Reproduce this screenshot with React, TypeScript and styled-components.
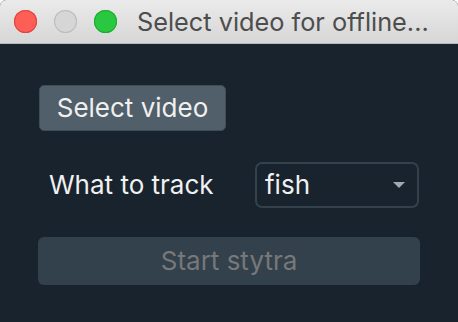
import React from 'react';
import styled, { createGlobalStyle } from 'styled-components';

const Global = createGlobalStyle`
  html, body {
    margin: 0;
    padding: 0;
    background: #ffffff;
  }
  body {
    font-family: Inter, "Liberation Sans", sans-serif;
  }
`;

const Window = styled.div`
  width: 458px;
  height: 322px;
  display: flex;
  flex-direction: column;
  background: #19232d;
  border-radius: 6px 6px 0 0;
  overflow: hidden;
`;

const TitleBar = styled.div`
  height: 43px;
  flex: none;
  display: flex;
  align-items: center;
  padding-left: 14px;
  background: linear-gradient(#ebebeb, #d6d6d6);
  border-bottom: 1px solid #b9b9b9;
`;

const Light = styled.span<{ $color: string; $border: string }>`
  width: 23px;
  height: 23px;
  border-radius: 50%;
  background: ${(p) => p.$color};
  box-shadow: inset 0 0 0 1px ${(p) => p.$border};
  margin-right: 17px;
`;

const Title = styled.div`
  font-size: 25.3px;
  color: #4d4d4d;
  margin-left: 3px;
  white-space: nowrap;
`;

const Body = styled.div`
  display: flex;
  flex-direction: column;
  padding: 41px 38px 0 38px;
`;

const SelectButton = styled.button`
  align-self: flex-start;
  width: 187px;
  height: 46px;
  margin-left: 1px;
  background: #505f69;
  border: 1px solid #3f4d57;
  border-radius: 5px;
  color: #f0f0f0;
  font-family: inherit;
  font-size: 26px;
  padding: 0 0 2px 0;
`;

const Row = styled.div`
  display: flex;
  align-items: center;
  margin-top: 31px;
  height: 46px;
`;

const Label = styled.div`
  width: 206px;
  padding-left: 11px;
  padding-bottom: 2px;
  color: #f0f0f0;
  font-size: 26px;
`;

const Combo = styled.div`
  width: 164px;
  height: 46px;
  box-sizing: border-box;
  border: 2px solid #32414b;
  border-radius: 7px;
  display: flex;
  align-items: center;
  justify-content: space-between;
  padding: 0 12px 2px 8px;
  color: #f0f0f0;
  font-size: 26px;
`;

const Arrow = styled.span`
  width: 0;
  height: 0;
  margin-top: 2px;
  border-left: 6px solid transparent;
  border-right: 6px solid transparent;
  border-top: 6px solid #9da9b5;
`;

const StartButton = styled.button`
  margin-top: 29px;
  width: 382px;
  height: 48px;
  background: #32414b;
  border: none;
  border-radius: 6px;
  color: #787878;
  font-family: inherit;
  font-size: 26px;
  padding: 0 0 2px 0;
`;

export default function App() {
  return (
    <>
      <Global />
      <Window>
        <TitleBar>
          <Light $color="#fd5f57" $border="#e0443e" />
          <Light $color="#d6d6d6" $border="#bcbcbc" />
          <Light $color="#2ac840" $border="#1eaa30" />
          <Title>Select video for offline...</Title>
        </TitleBar>
        <Body>
          <SelectButton>Select video</SelectButton>
          <Row>
            <Label>What to track</Label>
            <Combo>
              <span>fish</span>
              <Arrow />
            </Combo>
          </Row>
          <StartButton disabled>Start stytra</StartButton>
        </Body>
      </Window>
    </>
  );
}
